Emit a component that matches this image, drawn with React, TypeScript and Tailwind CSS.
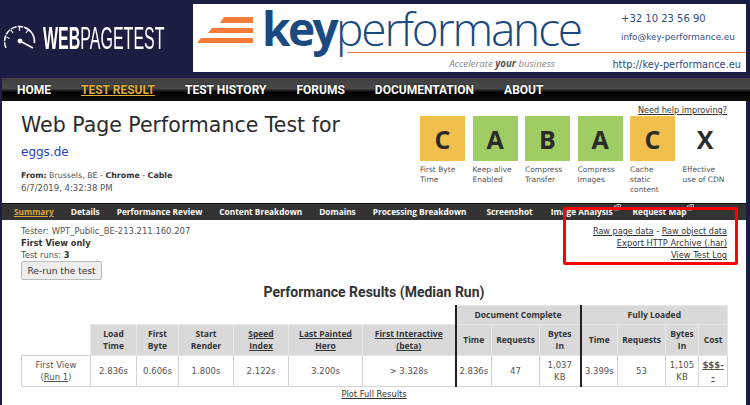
const grades = [
  { g: "C", c: "bg-[#f0bf4c]", t: ["First Byte", "Time"] },
  { g: "A", c: "bg-[#9fcc63]", t: ["Keep-alive", "Enabled"] },
  { g: "B", c: "bg-[#9fcc63]", t: ["Compress", "Transfer"] },
  { g: "A", c: "bg-[#9fcc63]", t: ["Compress", "Images"] },
  { g: "C", c: "bg-[#f0bf4c]", t: ["Cache", "static", "content"] },
  { g: "X", c: "bg-white", t: ["Effective", "use of CDN"] },
];
const tabs = ["Details", "Performance Review", "Content Breakdown", "Domains", "Processing Breakdown"];

function Ext() {
  return (
    <svg width="7" height="7" viewBox="0 0 7 7" className="absolute -right-[8px] -top-[2px]" fill="none" stroke="#ddd" strokeWidth="0.8">
      <rect x="0.5" y="2" width="4" height="4" />
      <path d="M2.5 0.5h4v3" />
    </svg>
  );
}

const th = "bg-[#d9d9d9] border border-[#e8e8e8] font-bold text-center px-0 align-middle text-[#333]";
const td = "border border-[#d4d4d4] text-center text-[#555] align-middle px-0 font-['DejaVu_Sans',sans-serif]";
const thick = "border-l-2 border-l-[#222]";

export default function App() {
  return (
    <div className="w-[750px] h-[405px] overflow-hidden bg-[#1b1d42] font-['DejaVu_Sans',sans-serif] text-[8.3px] leading-[12px] text-[#333]">
      <header className="h-[78px] flex pt-1 pl-[3px]">
        <div className="w-[190px] h-[68px] flex items-start gap-[7px] pt-[21px]">
          <svg width="33" height="26" viewBox="0 0 33 26" fill="none" stroke="#fff" className="shrink-0">
            <path d="M3 23A15 15 0 1 1 30 23" strokeWidth="1.5" strokeDasharray="6 1 6 1 6 1 6 1 6 1 20" />
            <path d="M16.5 2v4M8 5l2 3M25 5l-2 3M3.5 12l3 1.5" strokeWidth="1.2" />
            <circle cx="17" cy="16" r="2" fill="#fff" />
            <path d="M17 16l13 7" strokeWidth="1.5" />
          </svg>
          <div className="whitespace-nowrap text-white font-['Liberation_Sans',sans-serif] text-[32px] leading-[26px] origin-left scale-x-[0.5] w-[121px]">
            <span className="font-bold">WEB</span>PAGETEST
          </div>
        </div>
        <div className="w-[553px] h-[68px] bg-white relative flex flex-col">
          <div className="h-[48px] flex">
            <div className="w-[69px] pl-[4px] pt-[13px] shrink-0">
              <svg width="56" height="27" viewBox="0 0 56 27" fill="#f47b38">
                <path d="M27 0h29v6H23zM15 11h41v5H11zM4 21h52v5H0z" />
              </svg>
            </div>
            <div className="w-[359px] text-[#1a4a80] font-['Open_Sans',sans-serif] text-[46px] leading-[46px] whitespace-nowrap pt-[1px] tracking-[-2.15px] font-light">
              <span className="font-bold tracking-[-2.6px]">key</span>performance
            </div>
            <div className="text-[#2f4d7d] whitespace-nowrap">
              <div className="text-[10px] leading-[12px] pt-[9px]">+32 10 23 56 90</div>
              <div className="text-[8.8px] leading-[12px] pt-[6px]">info@key-performance.eu</div>
            </div>
          </div>
          <div className="h-[1px] bg-[#f47b38] ml-[154px]" />
          <div className="flex pt-[5px] whitespace-nowrap">
            <div className="w-[362px] text-right font-['Open_Sans',sans-serif] italic text-[9.7px] leading-[12px] text-[#888]">Accelerate <b className="text-[#555]">your</b> business</div>
            <div className="w-[186px] text-right text-[#2f4d7d] text-[9.8px] leading-[14px]">http://key-performance.eu</div>
          </div>
        </div>
      </header>

      <nav className="ml-[2px] h-[23px] flex items-center pl-[15px] gap-[30px] bg-[linear-gradient(#3f3f3f_0,#4a4a4a_45%,#000_62%,#111_100%)] text-white font-['Roboto',sans-serif] font-bold text-[12px] [text-shadow:0_0_2px_#000]">
        <span>HOME</span>
        <span className="text-[#e2ae3c] underline">TEST RESULT</span>
        <span>TEST HISTORY</span>
        <span>FORUMS</span>
        <span>DOCUMENTATION</span>
        <span>ABOUT</span>
      </nav>

      <main className="ml-[2px] w-[744px] bg-white h-[304px]">
        <section className="h-[102px] flex">
          <div className="w-[416px] pl-[19px] pt-[11px]">
            <h1 className="text-[20.5px] leading-[26px] text-[#2b2b2b] whitespace-nowrap">Web Page Performance Test for</h1>
            <div className="text-[12px] leading-[14px] mt-[7px] text-[#2b3fb8]">eggs.de</div>
            <div className="mt-[11px] text-[7.9px] leading-[12px]"><b>From:</b> <span className="text-[#555]">Brussels, BE</span> - <b>Chrome</b> - <b>Cable</b></div>
            <div className="text-[#555] text-[8.5px]">6/7/2019, 4:32:38 PM</div>
          </div>
          <div className="flex-1 flex flex-col">
            <a className="text-right underline pr-[19px] pt-[3px] h-[15px] text-[8.15px]">Need help improving?</a>
            <div className="flex gap-[7.5px] pl-[2px]">
              {grades.map((x, i) => (
                <div key={i} className="w-[45px]">
                  <div className={`${x.c} h-[45px] flex items-center justify-center font-bold font-['Open_Sans',sans-serif] text-[25px] text-[#2b2b2b]`}>{x.g}</div>
                  <div className="mt-[4px] leading-[10px] text-[7.5px] text-[#555] whitespace-nowrap">
                    {x.t.map((l) => <div key={l}>{l}</div>)}
                  </div>
                </div>
              ))}
            </div>
          </div>
        </section>

        <div className="h-[17px] bg-[#333] border-t border-[#111] flex items-center pl-[12px] gap-[17px] text-white font-bold font-['Open_Sans',sans-serif] text-[8.3px] whitespace-nowrap">
          <span className="text-[#d9a73a] underline">Summary</span>
          {tabs.map((t) => <span key={t}>{t}</span>)}
          <span className="ml-[3px]">Screenshot</span>
          <span className="relative ml-[1px]">Image Analysis<Ext /></span>
          <span className="relative ml-[3px]">Request Map<Ext /></span>
        </div>

        <section className="flex justify-between px-[19px] pt-[5px] h-[65px] relative">
          <div className="text-[#555]">
            <div className="text-[8.45px]">Tester: WPT_Public_BE-213.211.160.207</div>
            <div className="font-bold text-[#333]">First View only</div>
            <div>Test runs: <b className="text-[#333]">3</b></div>
            <button className="block w-[81px] h-[19px] bg-[#eee] border border-[#bbb] rounded-[2px] text-[#333] text-[9.1px]">Re-run the test</button>
          </div>
          <div className="text-right text-[#333]">
            <div className="text-[8.1px]"><span className="underline">Raw page data</span> - <span className="underline">Raw object data</span></div>
            <div className="underline">Export HTTP Archive (.har)</div>
            <div className="underline">View Test Log</div>
          </div>
          <div className="absolute left-[561px] top-[-13px] w-[175px] h-[58px] border-[3px] border-[#f00] rounded-[2px]" />
        </section>

        <h2 className="text-center font-bold font-['Roboto',sans-serif] text-[14px] leading-[16px] text-[#333] -mt-[1px]">Performance Results (Median Run)</h2>

        <table className="ml-[19px] mt-[5px] border-collapse table-fixed w-[706px] text-[8.5px] leading-[12px] font-['Open_Sans',sans-serif]">
          <colgroup>
            {[69, 46, 42, 55, 55, 74, 93, 36, 48, 41, 37, 48, 33, 29].map((w, i) => <col key={i} width={w} />)}
          </colgroup>
          <thead>
            <tr className="h-[19px]">
              <th colSpan={7} className="bg-white" />
              <th colSpan={3} className={`${th} ${thick}`}>Document Complete</th>
              <th colSpan={4} className={`${th} ${thick}`}>Fully Loaded</th>
            </tr>
            <tr className="h-[31px]">
              <th className="bg-white" />
              <th className={th}>Load<br />Time</th>
              <th className={th}>First<br />Byte</th>
              <th className={th}>Start<br />Render</th>
              <th className={th}><u>Speed<br />Index</u></th>
              <th className={th}><u>Last Painted<br />Hero</u></th>
              <th className={th}><u>First Interactive<br />(beta)</u></th>
              <th className={`${th} ${thick}`}>Time</th>
              <th className={th}>Requests</th>
              <th className={th}>Bytes<br />In</th>
              <th className={`${th} ${thick}`}>Time</th>
              <th className={th}>Requests</th>
              <th className={th}>Bytes<br />In</th>
              <th className={th}>Cost</th>
            </tr>
          </thead>
          <tbody>
            <tr className="h-[31px]">
              <td className={td}>First View<br />(<u>Run 1</u>)</td>
              <td className={td}>2.836s</td>
              <td className={td}>0.606s</td>
              <td className={td}>1.800s</td>
              <td className={td}>2.122s</td>
              <td className={td}>3.200s</td>
              <td className={td}>&gt; 3.328s</td>
              <td className={`${td} ${thick}`}>2.836s</td>
              <td className={td}>47</td>
              <td className={td}>1,037<br />KB</td>
              <td className={`${td} ${thick}`}>3.399s</td>
              <td className={td}>53</td>
              <td className={td}>1,105<br />KB</td>
              <td className={td}><u className="font-bold">$$$-<br />-</u></td>
            </tr>
          </tbody>
        </table>
        <div className="text-center underline text-[#333] mt-[1px]">Plot Full Results</div>
      </main>
    </div>
  );
}
